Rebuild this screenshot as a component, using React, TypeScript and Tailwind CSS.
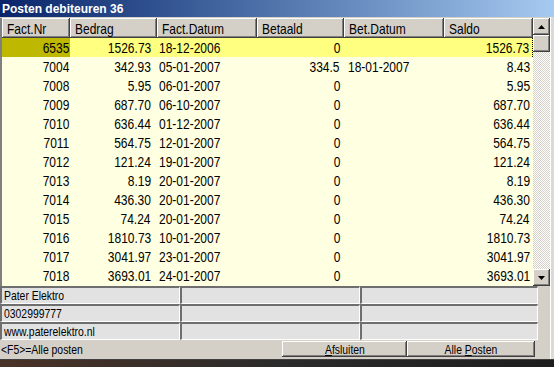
import React from 'react';

type Post = { nr: string; bedrag: string; datum: string; betaald: string; betDatum: string; saldo: string };

const posts: Post[] = [
  { nr: '6535', bedrag: '1526.73', datum: '18-12-2006', betaald: '0', betDatum: '', saldo: '1526.73' },
  { nr: '7004', bedrag: '342.93', datum: '05-01-2007', betaald: '334.5', betDatum: '18-01-2007', saldo: '8.43' },
  { nr: '7008', bedrag: '5.95', datum: '06-01-2007', betaald: '0', betDatum: '', saldo: '5.95' },
  { nr: '7009', bedrag: '687.70', datum: '06-10-2007', betaald: '0', betDatum: '', saldo: '687.70' },
  { nr: '7010', bedrag: '636.44', datum: '01-12-2007', betaald: '0', betDatum: '', saldo: '636.44' },
  { nr: '7011', bedrag: '564.75', datum: '12-01-2007', betaald: '0', betDatum: '', saldo: '564.75' },
  { nr: '7012', bedrag: '121.24', datum: '19-01-2007', betaald: '0', betDatum: '', saldo: '121.24' },
  { nr: '7013', bedrag: '8.19', datum: '20-01-2007', betaald: '0', betDatum: '', saldo: '8.19' },
  { nr: '7014', bedrag: '436.30', datum: '20-01-2007', betaald: '0', betDatum: '', saldo: '436.30' },
  { nr: '7015', bedrag: '74.24', datum: '20-01-2007', betaald: '0', betDatum: '', saldo: '74.24' },
  { nr: '7016', bedrag: '1810.73', datum: '10-01-2007', betaald: '0', betDatum: '', saldo: '1810.73' },
  { nr: '7017', bedrag: '3041.97', datum: '23-01-2007', betaald: '0', betDatum: '', saldo: '3041.97' },
  { nr: '7018', bedrag: '3693.01', datum: '24-01-2007', betaald: '0', betDatum: '', saldo: '3693.01' },
];

const info = ['Pater Elektro', '0302999777', 'www.paterelektro.nl'];

const raised = 'shadow-[inset_-1px_-1px_#404040,inset_1px_1px_#ffffff,inset_-2px_-2px_#808080]';

// the old screen font is tall and narrow: squeeze Liberation Sans horizontally
function L({ children }: { children: React.ReactNode }) {
  return <span className="inline-block whitespace-nowrap scale-x-[0.8] origin-left">{children}</span>;
}
function R({ children }: { children: React.ReactNode }) {
  return <span className="inline-block whitespace-nowrap scale-x-[0.8] origin-right">{children}</span>;
}

function ScrollButton({ up }: { up: boolean }) {
  return (
    <div className={`h-[17px] bg-[#d4d0c8] flex items-center justify-center ${raised}`}>
      <svg width="7" height="4" viewBox="0 0 7 4">
        {up ? <path d="M3.5 0 L7 4 L0 4 Z" fill="#000" /> : <path d="M0 0 L7 0 L3.5 4 Z" fill="#000" />}
      </svg>
    </div>
  );
}

export default function App() {
  return (
    <div className="w-[554px] h-[367px] overflow-hidden bg-[#d4d0c8] flex flex-col font-['Liberation_Sans',Arial,sans-serif] text-black">
      {/* Title bar */}
      <div className="h-[17px] shrink-0 bg-gradient-to-r from-[#0a246a] to-[#a6caf0] flex items-center pl-[2px]">
        <span className="text-white font-bold text-[12px] leading-none">Posten debiteuren 36</span>
      </div>

      <div className="flex flex-1">
        <div className="w-[550px] flex flex-col">
          {/* Grid */}
          <div className="mt-px h-[268px] flex border-l-2 border-[#808080]">
            <div className="w-[531px] flex flex-col bg-[#ffffe1] text-[15px]">
              <div className="h-[20px] flex bg-[#d4d0c8] leading-none">
                {[
                  ['Fact.Nr', 'w-[68px]'],
                  ['Bedrag', 'w-[87px]'],
                  ['Fact.Datum', 'w-[100px]'],
                  ['Betaald', 'w-[87px]'],
                  ['Bet.Datum', 'w-[100px]'],
                  ['Saldo', 'w-[89px]'],
                ].map(([label, w]) => (
                  <div key={label} className={`${w} h-full flex items-center pl-[5px] ${raised}`}>
                    <L>{label}</L>
                  </div>
                ))}
              </div>
              {posts.map((p, i) => {
                const sel = i === 0;
                return (
                  <div key={p.nr} className={`h-[19px] flex items-center leading-none ${sel ? 'bg-[#ffff80]' : ''}`}>
                    <div className={`w-[68px] h-full flex items-center justify-end pr-[1px] ${sel ? 'bg-[#bfb800]' : ''}`}><R>{p.nr}</R></div>
                    <div className="w-[87px] flex justify-end pr-[6px]"><R>{p.bedrag}</R></div>
                    <div className="w-[100px] pl-[2px]"><L>{p.datum}</L></div>
                    <div className="w-[87px] flex justify-end pr-[4px]"><R>{p.betaald}</R></div>
                    <div className="w-[100px] pl-[4px]"><L>{p.betDatum}</L></div>
                    <div className={`w-[89px] h-full flex items-center justify-end pr-[3px] ${sel ? 'border-r border-dotted border-black' : ''}`}><R>{p.saldo}</R></div>
                  </div>
                );
              })}
            </div>
            {/* Scrollbar */}
            <div className="w-[17px] flex flex-col bg-[repeating-conic-gradient(#d4d0c8_0_25%,#ffffff_0_50%)] bg-[length:2px_2px]">
              <ScrollButton up />
              <div className={`h-[17px] bg-[#d4d0c8] ${raised}`} />
              <div className="flex-1" />
              <ScrollButton up={false} />
            </div>
          </div>

          {/* Info fields */}
          <div className="flex flex-col w-[538px] text-[13px] leading-none">
            {info.map((t) => (
              <div key={t} className="h-[18px] flex">
                {[t, '', ''].map((v, j) => (
                  <div
                    key={j}
                    className={`${j === 2 ? 'w-[178px]' : 'w-[180px]'} h-full flex items-center pl-[2px] bg-[#e2e2e2] border-t-2 border-l-2 border-t-[#6e6e6e] border-l-[#6e6e6e] border-b border-r border-b-white border-r-white`}
                  >
                    <L>{v}</L>
                  </div>
                ))}
              </div>
            ))}
          </div>

          {/* Bottom bar */}
          <div className="h-[18px] flex items-center text-[13px] leading-none">
            <span className="pl-px w-[282px]"><L>&lt;F5&gt;=Alle posten</L></span>
            <button className={`w-[125px] h-[16px] flex items-center justify-center bg-[#d4d0c8] ${raised}`}>
              <span className="inline-block scale-x-[0.8]"><span className="underline">A</span>fsluiten</span>
            </button>
            <button className={`w-[128px] h-[16px] flex items-center justify-center bg-[#d4d0c8] ${raised}`}>
              <span className="inline-block scale-x-[0.8]">Alle <span className="underline">P</span>osten</span>
            </button>
          </div>
        </div>
        <div className="flex-1 border-l border-white bg-[#dcdad5]" />
      </div>

      {/* Edge of window behind */}
      <div className="h-[8px] shrink-0 border-t border-[#404040] bg-gradient-to-r from-[#4a3226] via-[#2b2b2b] to-[#1d1d1d]" />
    </div>
  );
}
